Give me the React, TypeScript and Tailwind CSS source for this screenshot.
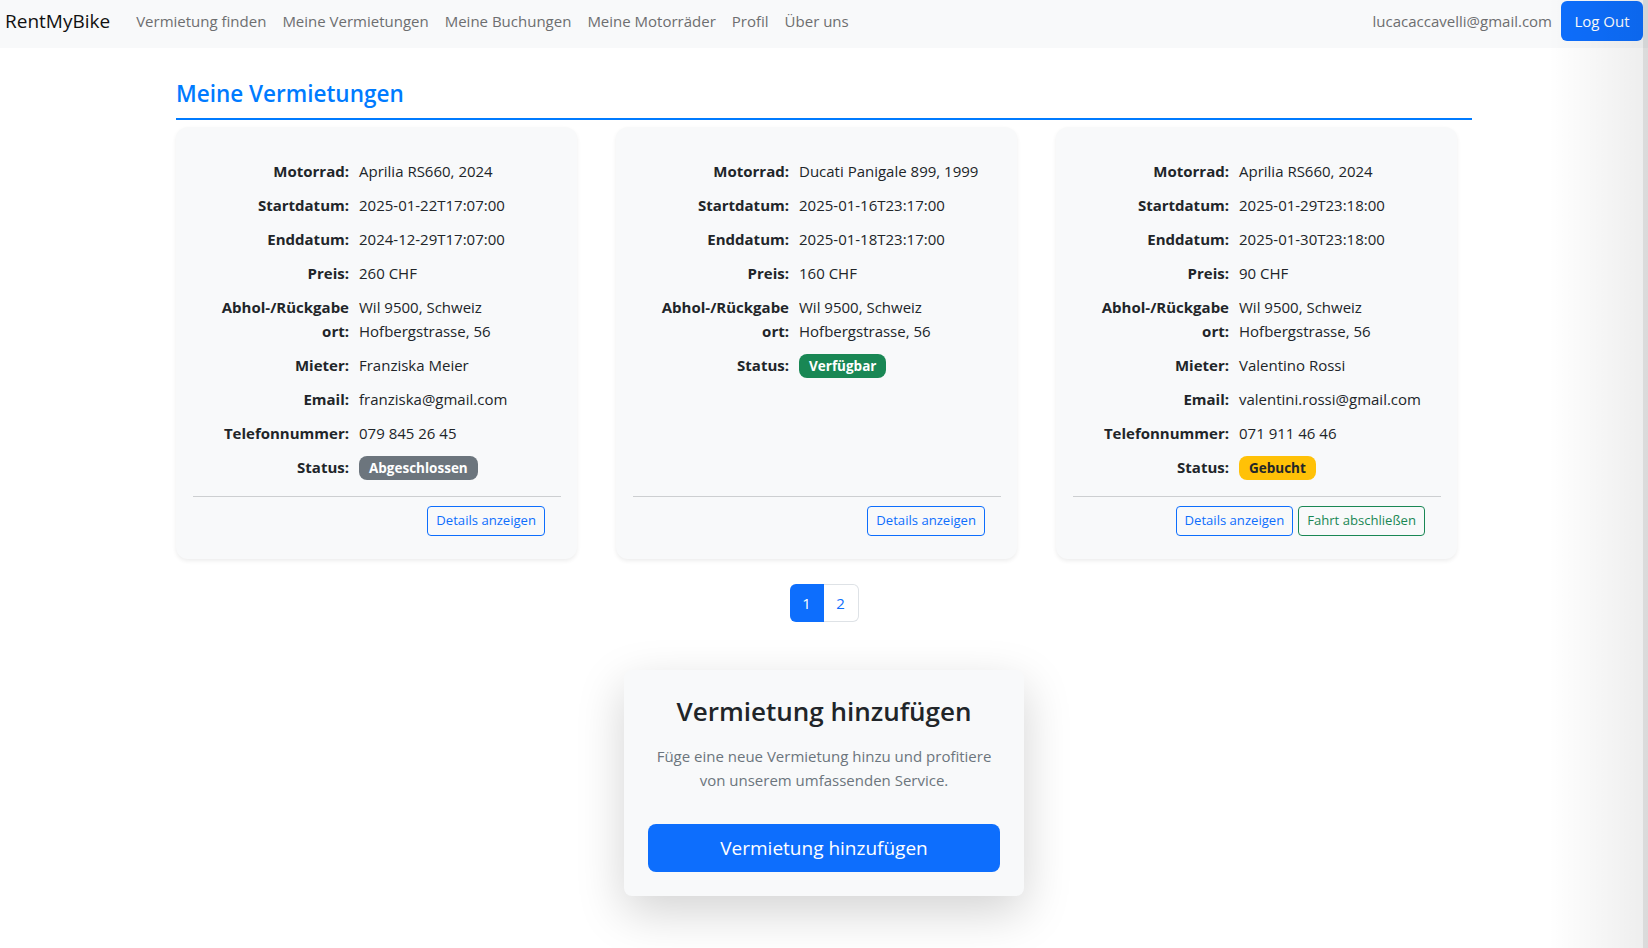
import React from 'react';

type Row = { label: string; value: React.ReactNode };

type Rental = {
  rows: Row[];
  status: 'Abgeschlossen' | 'Verfügbar' | 'Gebucht';
  finish?: boolean;
};

const navLinks = ['Vermietung finden', 'Meine Vermietungen', 'Meine Buchungen', 'Meine Motorräder', 'Profil', 'Über uns'];

const place = (
  <>
    Wil 9500, Schweiz
    <br />
    Hofbergstrasse, 56
  </>
);

const rentals: Rental[] = [
  {
    rows: [
      { label: 'Motorrad:', value: 'Aprilia RS660, 2024' },
      { label: 'Startdatum:', value: '2025-01-22T17:07:00' },
      { label: 'Enddatum:', value: '2024-12-29T17:07:00' },
      { label: 'Preis:', value: '260 CHF' },
      { label: 'Abhol-/Rückgabe ort:', value: place },
      { label: 'Mieter:', value: 'Franziska Meier' },
      { label: 'Email:', value: 'franziska@gmail.com' },
      { label: 'Telefonnummer:', value: '079 845 26 45' },
    ],
    status: 'Abgeschlossen',
  },
  {
    rows: [
      { label: 'Motorrad:', value: 'Ducati Panigale 899, 1999' },
      { label: 'Startdatum:', value: '2025-01-16T23:17:00' },
      { label: 'Enddatum:', value: '2025-01-18T23:17:00' },
      { label: 'Preis:', value: '160 CHF' },
      { label: 'Abhol-/Rückgabe ort:', value: place },
    ],
    status: 'Verfügbar',
  },
  {
    rows: [
      { label: 'Motorrad:', value: 'Aprilia RS660, 2024' },
      { label: 'Startdatum:', value: '2025-01-29T23:18:00' },
      { label: 'Enddatum:', value: '2025-01-30T23:18:00' },
      { label: 'Preis:', value: '90 CHF' },
      { label: 'Abhol-/Rückgabe ort:', value: place },
      { label: 'Mieter:', value: 'Valentino Rossi' },
      { label: 'Email:', value: 'valentini.rossi@gmail.com' },
      { label: 'Telefonnummer:', value: '071 911 46 46' },
    ],
    status: 'Gebucht',
    finish: true,
  },
];

const badgeStyles = {
  Abgeschlossen: 'bg-[#6c757d] text-white',
  Verfügbar: 'bg-[#198754] text-white',
  Gebucht: 'bg-[#ffc107] text-[#212529]',
};

function RentalCard({ rental }: { rental: Rental }) {
  return (
    <div className="flex flex-col rounded-[12px] bg-[#f8f9fa] pl-[17px] pr-[16px] pt-[32px] pb-[23px] shadow-[0_2px_4px_rgba(0,0,0,0.075)]">
      <div className="flex flex-1 flex-col gap-[10px]">
        {rental.rows.map((row) => (
          <div key={row.label} className="grid grid-cols-[156px_1fr] gap-x-[10px] leading-[24px]">
            <div className="text-right font-bold">{row.label}</div>
            <div>{row.value}</div>
          </div>
        ))}
        <div className="grid grid-cols-[156px_1fr] gap-x-[10px] leading-[24px]">
          <div className="text-right font-bold">Status:</div>
          <div>
            <span
              className={`inline-block h-[24px] rounded-[8px] px-[10px] text-[13.5px] font-bold leading-[24px] ${badgeStyles[rental.status]}`}
            >
              {rental.status}
            </span>
          </div>
        </div>
      </div>
      <div className="mt-[16px] h-px bg-[#cdcfd1]" />
      <div className="mt-[9px] flex justify-end gap-[5px] pr-[16px]">
        <button className="h-[30px] rounded-[4px] border border-[#0d6efd] px-[8px] text-[13.1px] text-[#0d6efd]">
          Details anzeigen
        </button>
        {rental.finish && (
          <button className="h-[30px] rounded-[4px] border border-[#198754] px-[8px] text-[13.1px] text-[#198754]">
            Fahrt abschließen
          </button>
        )}
      </div>
    </div>
  );
}

export default function App() {
  return (
    <div
      className="relative h-[948px] overflow-hidden bg-white text-[15px] text-[#212529]"
      style={{ fontFamily: '"Open Sans", "Noto Sans", sans-serif' }}
    >
      {/* Navbar */}
      <nav className="flex h-[48px] items-start bg-[#f8f9fa] pl-[5px] pr-[5px] pt-[1px]">
        <span className="mr-[18px] flex h-[40px] items-center text-[19px] text-[#111]">RentMyBike</span>
        <div className="flex h-[40px] items-center">
          {navLinks.map((link) => (
            <a key={link} className="px-[8px] text-[15px] text-[#6d6e70]">
              {link}
            </a>
          ))}
        </div>
        <div className="ml-auto flex h-[40px] items-center gap-[9px]">
          <span className="text-[15px] text-[#6d6e70]">lucacaccavelli@gmail.com</span>
          <button className="h-[40px] w-[82px] rounded-[6px] bg-[#0d6efd] text-[15px] text-white">Log Out</button>
        </div>
      </nav>

      {/* Content */}
      <main className="mx-auto w-[1296px]">
        <h2 className="mt-[31px] border-b-2 border-[#007bff] pb-[10px] text-[22.5px] font-semibold leading-[29px] text-[#007bff]">
          Meine Vermietungen
        </h2>

        <div className="mt-[7px] grid grid-cols-[401px_401px_401px] gap-x-[39px]">
          {rentals.map((r, i) => (
            <RentalCard key={i} rental={r} />
          ))}
        </div>

        {/* Pagination */}
        <div className="mt-[25px] flex justify-center">
          <span className="flex h-[38px] w-[34px] items-center justify-center rounded-l-[6px] bg-[#0d6efd] text-white">1</span>
          <span className="flex h-[38px] w-[35px] items-center justify-center rounded-r-[6px] border border-l-0 border-[#dee2e6] bg-white text-[#0d6efd]">
            2
          </span>
        </div>

        {/* Add rental */}
        <div className="mx-auto mt-[48px] w-[400px] rounded-[8px] bg-[#f8f9fa] p-[24px] text-center shadow-[0_16px_48px_rgba(0,0,0,0.175)]">
          <h3 className="text-[26px] font-semibold leading-[34px]">Vermietung hinzufügen</h3>
          <p className="mt-[16px] leading-[24px] text-[#6c757d]">
            Füge eine neue Vermietung hinzu und profitiere
            <br />
            von unserem umfassenden Service.
          </p>
          <button className="mt-[32px] h-[48px] w-full rounded-[8px] bg-[#0d6efd] text-[19px] text-white">
            Vermietung hinzufügen
          </button>
        </div>
      </main>

      {/* right edge shade */}
      <div className="pointer-events-none absolute right-0 top-0 h-full w-[100px] bg-gradient-to-r from-transparent to-black/[0.07]" />
      <div className="pointer-events-none absolute right-0 top-0 h-full w-[5px] bg-black/[0.08]" />
    </div>
  );
}
